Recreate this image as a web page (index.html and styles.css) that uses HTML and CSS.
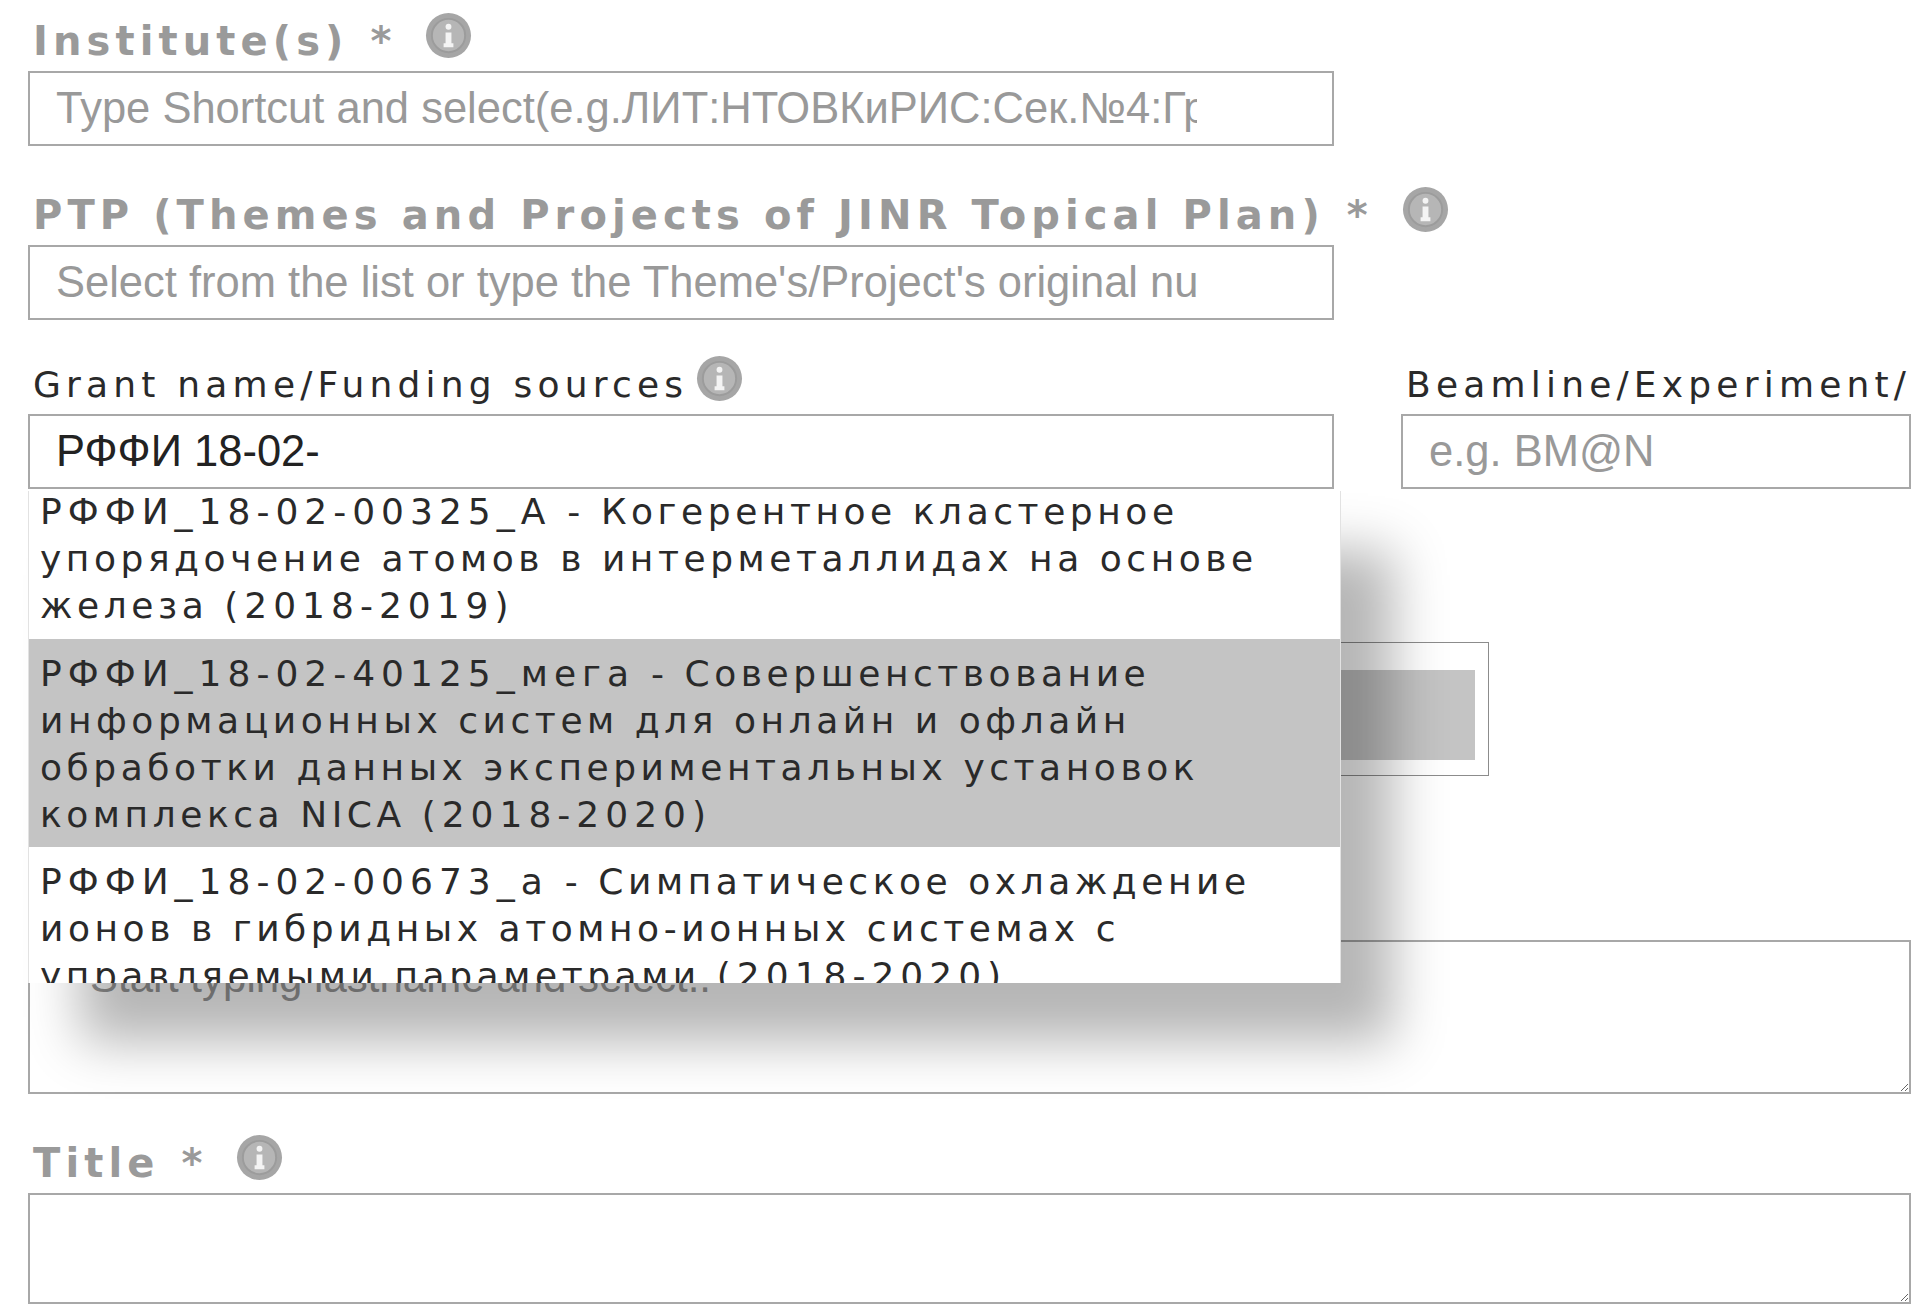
FILE: index.html
```html
<!DOCTYPE html>
<html lang="en">
<head>
    <meta charset="UTF-8">
    <title>Publication form</title>
    <link rel="stylesheet" href="styles.css">
</head>
<body>
    <svg class="icon-defs" width="0" height="0">
        <symbol id="info" viewBox="0 0 48 48">
            <circle cx="24" cy="24" r="23" fill="#a6a6a6"/>
            <circle cx="24" cy="24" r="17" fill="#b6b6b6" stroke="#9c9c9c" stroke-width="2"/>
            <circle cx="24" cy="15" r="3" fill="#f4f4f4"/>
            <path d="M21 21h6v11h2v4H19v-4h2z" fill="#f4f4f4"/>
        </symbol>
    </svg>

    <form class="form">
        <div class="field field-first">
            <label class="label label-required">Institute(s)<span class="star">*</span>
                <svg class="info"><use href="#info"/></svg></label>
            <input class="input" type="text" placeholder="Type Shortcut and select(e.g.ЛИТ:НТОВКиРИС:Сек.№4:Группа)">
        </div>

        <div class="field field-ptp">
            <label class="label label-required">PTP (Themes and Projects of JINR Topical Plan)<span class="star">*</span>
                <svg class="info"><use href="#info"/></svg></label>
            <input class="input" type="text" placeholder="Select from the list or type the Theme's/Project's original number">
        </div>

        <div class="row">
            <div class="field field-grant">
                <label class="label">Grant name/Funding sources
                    <svg class="info info-tight"><use href="#info"/></svg></label>
                <input class="input" type="text" value="РФФИ 18-02-">

                <!-- autocomplete list -->
                <div class="menu">
                    <div class="menu-item menu-item-first"><span class="code">РФФИ_18-02-00325_А</span> - Когерентное кластерное упорядочение атомов в интерметаллидах на основе железа <span class="code">(2018-2019)</span></div>
                    <div class="menu-item menu-item-active"><span class="code">РФФИ_18-02-40125_мега</span> - Совершенствование информационных систем для онлайн и офлайн обработки данных экспериментальных установок комплекса NICA <span class="code">(2018-2020)</span></div>
                    <div class="menu-item"><span class="code">РФФИ_18-02-00673_а</span> - Симпатическое охлаждение ионов в гибридных атомно-ионных системах с управляемыми параметрами <span class="code">(2018-2020)</span></div>
                </div>
            </div>
            <div class="field field-beam">
                <label class="label">Beamline/Experiment/</label>
                <input class="input input-wide" type="text" placeholder="e.g. BM@N">
            </div>
        </div>

        <div class="upload">
            <div class="upload-bar"></div>
        </div>

        <textarea class="area area-authors" placeholder="Start typing lastname and select.."></textarea>

        <div class="field field-title">
            <label class="label label-required">Title<span class="star">*</span>
                <svg class="info"><use href="#info"/></svg></label>
            <textarea class="area area-title"></textarea>
        </div>
    </form>
</body>
</html>
```

FILE: styles.css
```css
body {
    margin: 0;
    background: #ffffff;
    font-family: "DejaVu Sans", sans-serif;
    color: #2a2a2a;
    overflow: hidden;
}

.icon-defs {
    position: absolute;
}

.form {
    padding: 0 14px 0 28px;
}

/* labels */
.label {
    display: flex;
    align-items: center;
    height: 40px;
    padding-left: 5px;
    margin-bottom: 10px;
    font-size: 36px;
    letter-spacing: 5.2px;
    white-space: nowrap;
}

.label-required {
    font-weight: bold;
    font-size: 40px;
    letter-spacing: 5.1px;
    color: #9a9a9a;
}

.star {
    margin-left: 22px;
    letter-spacing: 0;
}

.info {
    width: 47px;
    height: 47px;
    margin: -16px 0 -4px 34px;
    flex: none;
}

.info-tight {
    margin-left: 8px;
}

.field-first {
    padding-top: 21px;
}

.field-ptp {
    padding-top: 49px;
}

.field-title {
    padding-top: 49px;
}

/* inputs */
.input {
    display: block;
    box-sizing: border-box;
    width: 1306px;
    height: 75px;
    padding: 0 135px 0 26px;
    border: 2px solid #a8a8a8;
    background: #ffffff;
    font-family: "Liberation Sans", sans-serif;
    font-size: 43.5px;
    color: #222222;
}

.input::placeholder,
.area::placeholder {
    color: #999999;
    opacity: 1;
}

.input-wide {
    width: 510px;
}

.row {
    display: flex;
    gap: 67px;
    padding-top: 44px;
}

.field-grant {
    position: relative;
}

/* dropdown */
.menu {
    position: absolute;
    top: 127px;
    left: 0;
    box-sizing: border-box;
    width: 1313px;
    height: 492px;
    overflow: hidden;
    border: 1px solid #e2e2e2;
    border-width: 0 1px;
    background: #ffffff;
    box-shadow: 52px 59px 50px rgba(0, 0, 0, 0.29);
    z-index: 2;
    font-size: 36px;
    letter-spacing: 4.55px;
    line-height: 47px;
}

.menu-item {
    padding: 11px 11px 9px;
}

.menu-item-first {
    margin-top: -13px;
    padding: 10px 11px;
}

.menu-item-active {
    background: #c4c4c4;
}

.code {
    letter-spacing: 6px;
}

/* box behind the list */
.upload {
    box-sizing: border-box;
    width: 1461px;
    height: 134px;
    margin-top: 153px;
    padding: 27px 13px 15px 30px;
    border: 1px solid #8c8c8c;
}

.upload-bar {
    height: 90px;
    background: #c4c4c4;
}

/* textareas */
.area {
    display: block;
    box-sizing: border-box;
    width: 1883px;
    border: 2px solid #a8a8a8;
    background: #ffffff;
    font-family: "Liberation Sans", sans-serif;
    font-size: 42px;
}

.area-authors {
    height: 154px;
    margin-top: 164px;
    padding: 12px 60px;
}

.area-title {
    height: 111px;
}
```
